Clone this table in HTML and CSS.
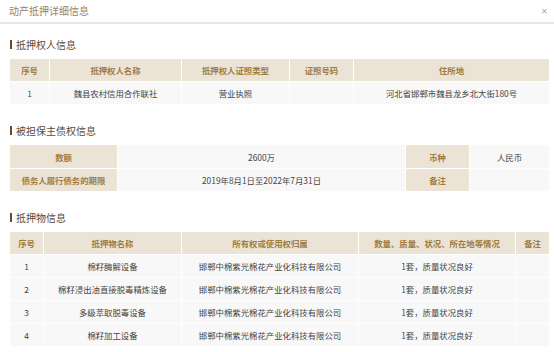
FILE: index.html
```html
<!DOCTYPE html>
<html>
<head>
    <meta charset="utf-8">
    <title>动产抵押详细信息</title>
    <link rel="stylesheet" href="styles.css">
</head>
<body>
    <div class="dialog">
        <div class="dialog-head">
            <span class="dialog-title">动产抵押详细信息</span>
            <span class="close">&#x2715;</span>
        </div>

        <div class="dialog-body">
            <!-- 抵押权人 -->
            <h3 class="section-title">抵押权人信息</h3>
            <table class="info-table">
                <colgroup>
                    <col style="width:40px">
                    <col style="width:132px">
                    <col style="width:108px">
                    <col style="width:64px">
                    <col>
                </colgroup>
                <tr>
                    <th>序号</th>
                    <th>抵押权人名称</th>
                    <th>抵押权人证照类型</th>
                    <th>证照号码</th>
                    <th>住所地</th>
                </tr>
                <tr>
                    <td>1</td>
                    <td>魏县农村信用合作联社</td>
                    <td>营业执照</td>
                    <td></td>
                    <td>河北省邯郸市魏县龙乡北大街180号</td>
                </tr>
            </table>

            <!-- 被担保主债权 -->
            <h3 class="section-title">被担保主债权信息</h3>
            <table class="info-table kv-table">
                <colgroup>
                    <col style="width:108px">
                    <col style="width:288px">
                    <col style="width:64px">
                    <col>
                </colgroup>
                <tr>
                    <th>数额</th>
                    <td>2600万</td>
                    <th>币种</th>
                    <td>人民币</td>
                </tr>
                <tr>
                    <th>债务人履行债务的期限</th>
                    <td>2019年8月1日至2022年7月31日</td>
                    <th>备注</th>
                    <td></td>
                </tr>
            </table>

            <!-- 抵押物 -->
            <h3 class="section-title">抵押物信息</h3>
            <table class="info-table">
                <colgroup>
                    <col style="width:34px">
                    <col style="width:138px">
                    <col style="width:177px">
                    <col style="width:157px">
                    <col>
                </colgroup>
                <tr>
                    <th>序号</th>
                    <th>抵押物名称</th>
                    <th>所有权或使用权归属</th>
                    <th>数量、质量、状况、所在地等情况</th>
                    <th>备注</th>
                </tr>
                <tr>
                    <td>1</td>
                    <td>棉籽酶解设备</td>
                    <td>邯郸中棉紫光棉花产业化科技有限公司</td>
                    <td>1套，质量状况良好</td>
                    <td></td>
                </tr>
                <tr>
                    <td>2</td>
                    <td>棉籽浸出油直接脱毒精炼设备</td>
                    <td>邯郸中棉紫光棉花产业化科技有限公司</td>
                    <td>1套，质量状况良好</td>
                    <td></td>
                </tr>
                <tr>
                    <td>3</td>
                    <td>多级萃取脱毒设备</td>
                    <td>邯郸中棉紫光棉花产业化科技有限公司</td>
                    <td>1套，质量状况良好</td>
                    <td></td>
                </tr>
                <tr>
                    <td>4</td>
                    <td>棉籽加工设备</td>
                    <td>邯郸中棉紫光棉花产业化科技有限公司</td>
                    <td>1套，质量状况良好</td>
                    <td></td>
                </tr>
            </table>
        </div>
    </div>
</body>
</html>
```

FILE: styles.css
```css
body {
    margin: 0;
    background: #fff;
    font-family: "Noto Sans CJK SC", "Liberation Sans", sans-serif;
    color: #444;
}
.dialog {
    width: 554px;
}
.dialog-head {
    height: 22px;
    display: flex;
    align-items: center;
    justify-content: space-between;
    padding: 0 6px 0 9px;
    border-bottom: 2px solid #e6e6e6;
}
.dialog-title {
    font-size: 10px;
    color: #a0805a;
    line-height: 22px;
}
.close {
    font-size: 8px;
    color: #aaa;
    margin-top: -2px;
}
.dialog-body {
    padding: 0 4px 0 9px;
}
.section-title {
    margin: 20px 0 8px 1px;
    font-size: 10px;
    font-weight: normal;
    line-height: 11px;
    color: #5c4a3a;
    display: flex;
    align-items: center;
}
.section-title:first-child {
    margin-top: 15px;
}
.section-title::before {
    content: "";
    width: 2px;
    height: 9px;
    background: #6b4a2a;
    margin-right: 4px;
}
.info-table {
    width: 541px;
    border-collapse: collapse;
    table-layout: fixed;
    font-size: 8.4px;
}
.info-table tr {
    height: 23px;
}
.info-table th,
.info-table td {
    border: 1px solid #fff;
    text-align: center;
    padding: 0 2px;
    white-space: nowrap;
    overflow: hidden;
}
.info-table th {
    background: #ebe3d6;
    color: #a07c3e;
    font-weight: bold;
}
.info-table td {
    background: #f8f8f8;
    color: #444;
}
.kv-table tr:first-child {
    height: 24px;
}
```
